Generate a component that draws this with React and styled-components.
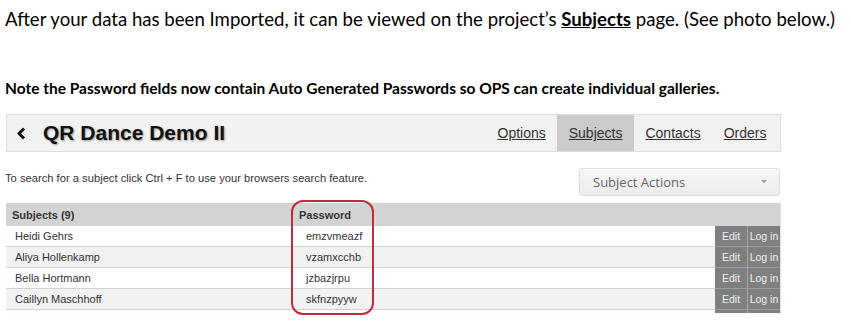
import React from 'react';
import styled, { createGlobalStyle } from 'styled-components';

const GlobalStyle = createGlobalStyle`
  html, body {
    margin: 0;
    padding: 0;
    background: #fff;
  }
`;

const Doc = styled.div`
  width: 851px;
  height: 331px;
  overflow: hidden;
  padding: 0 0 0 5px;
  box-sizing: border-box;
  font-family: Lato, "Open Sans", sans-serif;
  color: #000;
`;

const Intro = styled.p`
  margin: 0;
  padding-top: 8px;
  font-size: 18.6px;
  line-height: 22px;

  b {
    font-weight: 700;
    text-decoration: underline;
  }
`;

const Note = styled.p`
  margin: 0;
  padding-top: 48px;
  font-size: 15.5px;
  font-weight: 700;
  line-height: 20px;
`;

const Shot = styled.div`
  position: relative;
  width: 775px;
  margin: 16px 0 0 1px;
  font-family: "Liberation Sans", Arial, sans-serif;
  color: #333;
`;

const HeaderBar = styled.div`
  display: flex;
  align-items: stretch;
  justify-content: space-between;
  height: 36px;
  background: #f2f2f2;
  border: 1px solid #dcdcdc;
`;

const Title = styled.div`
  display: flex;
  align-items: center;
  gap: 17px;
  padding-left: 10px;
  font-size: 21px;
  font-weight: 700;
  color: #111;
  text-shadow: 1px 1px 2px rgba(0, 0, 0, 0.35);
`;

const Nav = styled.nav`
  display: flex;
  align-items: stretch;
  padding-right: 2px;
`;

const NavLink = styled.a`
  display: flex;
  align-items: center;
  padding: 0 11.5px;
  font-size: 14px;
  color: #333;
  text-decoration: underline;
  background: ${({ $active }) => ($active ? '#cbcbcb' : 'transparent')};
`;

const Toolbar = styled.div`
  display: flex;
  align-items: center;
  justify-content: space-between;
  height: 51px;
`;

const Hint = styled.span`
  font-size: 11.2px;
  color: #333;
  margin-left: -1px;
`;

const Select = styled.div`
  display: flex;
  align-items: center;
  justify-content: space-between;
  width: 201px;
  height: 28px;
  padding: 0 12px 0 13px;
  box-sizing: border-box;
  margin-right: 1px;
  margin-top: 8px;
  border: 1px solid #dedede;
  border-radius: 3px;
  background: linear-gradient(#f7f7f7, #ececec);
  font-family: "Open Sans", sans-serif;
  font-size: 13px;
  color: #666;
`;

const Caret = styled.span`
  width: 0;
  height: 0;
  border-left: 3px solid transparent;
  border-right: 3px solid transparent;
  border-top: 3px solid #9a9a9a;
`;

const Table = styled.div`
  width: 774px;
  height: 110px;
  overflow: hidden;
  box-shadow: 1px 0 1px rgba(0, 0, 0, 0.12);
`;

const Row = styled.div`
  display: grid;
  grid-template-columns: 289px 1fr 32px 33px;
  height: ${({ $head }) => ($head ? '23px' : '20px')};
  align-items: center;
  background: ${({ $head, $alt }) => ($head ? '#d3d3d3' : $alt ? '#f2f2f2' : '#fff')};
  border-bottom: ${({ $head }) => ($head ? 'none' : '1px solid #d2d2d2')};
  font-size: 11px;
  font-weight: ${({ $head }) => ($head ? 700 : 400)};
`;

const Cell = styled.span`
  padding-left: ${({ $indent }) => $indent}px;
  white-space: nowrap;
`;

const ActionBtn = styled.span`
  align-self: stretch;
  display: flex;
  align-items: center;
  justify-content: center;
  background: #7f7f7f;
  color: #f0f0f0;
  font-size: 10.5px;
  border-left: ${({ $split }) => ($split ? '1px solid #a6a6a6' : 'none')};
  margin-bottom: -1px;
  border-bottom: 1px solid #9c9c9c;
`;

const Highlight = styled.div`
  position: absolute;
  left: 285px;
  top: 86px;
  width: 83px;
  height: 115px;
  border: 2px solid #c4293e;
  border-radius: 12px;
  box-sizing: border-box;
  pointer-events: none;
`;

const subjects = [
  { name: 'Heidi Gehrs', pass: 'emzvmeazf' },
  { name: 'Aliya Hollenkamp', pass: 'vzamxcchb' },
  { name: 'Bella Hortmann', pass: 'jzbazjrpu' },
  { name: 'Caillyn Maschhoff', pass: 'skfnzpyyw' },
];

const Chevron = () => (
  <svg width="9" height="13" viewBox="0 0 9 13">
    <polyline points="7,1.5 2,6.5 7,11.5" fill="none" stroke="#111" strokeWidth="3" />
  </svg>
);

export default function App() {
  return (
    <>
      <GlobalStyle />
      <Doc>
        <Intro>
          After your data has been Imported, it can be viewed on the project’s <b>Subjects</b> page. (See photo below.)
        </Intro>
        <Note>
          Note the Password fields now contain Auto Generated Passwords so OPS can create individual galleries.
        </Note>
        <Shot>
          <HeaderBar>
            <Title>
              <Chevron />
              QR Dance Demo II
            </Title>
            <Nav>
              <NavLink>Options</NavLink>
              <NavLink $active>Subjects</NavLink>
              <NavLink>Contacts</NavLink>
              <NavLink>Orders</NavLink>
            </Nav>
          </HeaderBar>
          <Toolbar>
            <Hint>To search for a subject click Ctrl + F to use your browsers search feature.</Hint>
            <Select>
              Subject Actions
              <Caret />
            </Select>
          </Toolbar>
          <Table>
            <Row $head>
              <Cell $indent={6}>Subjects (9)</Cell>
              <Cell $indent={4}>Password</Cell>
              <span />
              <span />
            </Row>
            {subjects.map((s, i) => (
              <Row key={i} $alt={i % 2 === 1}>
                <Cell $indent={9}>{s.name}</Cell>
                <Cell $indent={11}>{s.pass}</Cell>
                <ActionBtn>Edit</ActionBtn>
                <ActionBtn $split>Log in</ActionBtn>
              </Row>
            ))}
            <Row>
              <Cell />
              <Cell />
              <ActionBtn />
              <ActionBtn $split />
            </Row>
          </Table>
          <Highlight />
        </Shot>
      </Doc>
    </>
  );
}
